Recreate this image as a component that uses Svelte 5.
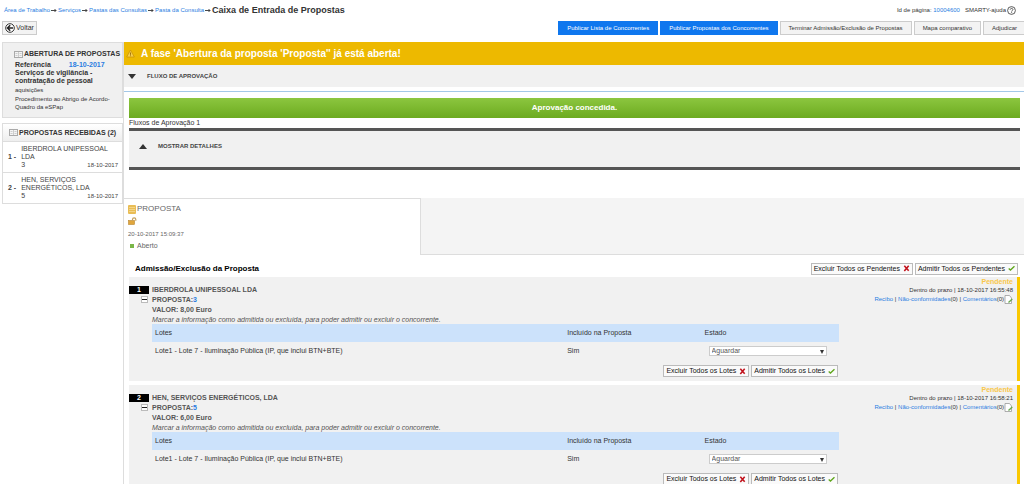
<script>
	const crumbs = ['Área de Trabalho', 'Serviços', 'Pastas das Consultas', 'Pasta da Consulta'];

	const received = [
		{ name: 'IBERDROLA UNIPESSOAL LDA', id: 3, date: '18-10-2017' },
		{ name: 'HEN, SERVIÇOS ENERGÉTICOS, LDA', id: 5, date: '18-10-2017' }
	];

	let bids = $state([
		{ name: 'IBERDROLA UNIPESSOAL LDA', id: 3, value: '8,00', time: '18-10-2017 16:55:48', state: 'Aguardar', open: true },
		{ name: 'HEN, SERVIÇOS ENERGÉTICOS, LDA', id: 5, value: '6,00', time: '18-10-2017 16:58:21', state: 'Aguardar', open: true }
	]);

	function setAll(state) {
		bids.forEach((bid) => (bid.state = state));
	}
</script>

{#snippet cross()}
	<svg class="mark" viewBox="0 0 8 8" aria-hidden="true"><path d="M1.500 .8 6.500 6.600M6.500 .8 1.500 6.800" stroke="#c1121c" stroke-width="1.800" fill="none" /></svg>
{/snippet}

{#snippet tick()}
	<svg class="mark" viewBox="0 0 8 8" aria-hidden="true"><path d="M.8 4 2.800 5.800 7.400 1.400" stroke="#5fa61c" stroke-width="1.500" fill="none" /></svg>
{/snippet}

{#snippet book()}
	<svg class="book" viewBox="0 0 9 7" aria-hidden="true">
		<rect x=".5" y=".5" width="8" height="6" fill="#f4f4f4" stroke="#aaa" />
		<path d="M4.500 1v5M1.500 2.500h2M1.500 4.500h2M5.500 2.500h2M5.500 4.500h2" stroke="#bbb" stroke-width=".7" />
	</svg>
{/snippet}

<div class="page">
	<header class="top">
		<nav class="crumbs">
			{#each crumbs as crumb}
				<a href="#top">{crumb}</a>
				<svg class="arrow" viewBox="0 0 6 5" aria-hidden="true"><path d="M0 2.500h5M3.500 1l1.500 1.500L3.500 4" stroke="#333" stroke-width=".9" fill="none" /></svg>
			{/each}
			<h1>Caixa de Entrada de Propostas</h1>
		</nav>
		<div class="page-id">
			<span>Id de página: <a href="#id">10004600</a></span>
			<a class="help" href="#help">
				SMARTY-ajuda
				<svg viewBox="0 0 9 9" aria-hidden="true">
					<circle cx="4.500" cy="4.500" r="3.900" fill="none" stroke="#333" stroke-width=".8" />
					<path d="M3.200 3.700c0-1.800 2.700-1.700 2.700-.1 0 .9-1.300 1-1.300 2M4.600 6.200v.9" fill="none" stroke="#333" stroke-width=".8" />
				</svg>
			</a>
		</div>
	</header>

	<div class="toolbar">
		<button class="btn back">
			<svg viewBox="0 0 10 10" aria-hidden="true">
				<circle cx="5" cy="5" r="4.300" fill="#fff" stroke="#333" />
				<path d="M8 5H3M5.200 2.300 2.500 5l2.700 2.700" fill="none" stroke="#222" stroke-width="1.500" />
			</svg>
			Voltar
		</button>
		<div class="actions">
			<button class="btn primary">Publicar Lista de Concorrentes</button>
			<button class="btn primary">Publicar Propostas dos Concorrentes</button>
			<button class="btn">Terminar Admissão/Exclusão de Propostas</button>
			<button class="btn">Mapa comparativo</button>
			<button class="btn">Adjudicar</button>
		</div>
	</div>

	<div class="columns">
		<aside>
			<section class="summary">
				<h2>{@render book()} ABERTURA DE PROPOSTAS</h2>
				<p class="ref"><b>Referência</b> <a href="#ref">18-10-2017</a></p>
				<p class="subject">Serviços de vigilância - contratação de pessoal</p>
				<p class="kind">aquisições</p>
				<p class="kind">Procedimento ao Abrigo de Acordo-Quadro da eSPap</p>
			</section>
			<section class="received">
				<h2>{@render book()} PROPOSTAS RECEBIDAS (2)</h2>
				{#each received as item, i}
					<div class="entry">
						<span class="num">{i + 1} -</span>
						<div class="who">
							<p>{item.name}</p>
							<div class="meta"><span>{item.id}</span><time>{item.date}</time></div>
						</div>
					</div>
				{/each}
			</section>
		</aside>

		<main>
			<div class="banner">
				<svg viewBox="0 0 9 9" aria-hidden="true"><path d="M4.500 1 8.300 8H.7z" fill="#f7cf4a" stroke="#c98f00" stroke-width=".7" /><path d="M4.500 3.500v2.300M4.500 6.400v.8" stroke="#8a5a00" stroke-width=".8" /></svg>
				A fase 'Abertura da proposta 'Proposta'' já está aberta!
			</div>
			<button class="fold"><span class="tri down"></span>FLUXO DE APROVAÇÃO</button>
			<div class="approval">
				<div class="granted">Aprovação concedida.</div>
				<p>Fluxos de Aprovação 1</p>
				<button class="details"><span class="tri up"></span>MOSTRAR DETALHES</button>
			</div>

			<div class="tabs">
				<div class="tab">
					<div class="tab-title">
						<svg viewBox="0 0 8 9" aria-hidden="true"><rect width="8" height="9" rx="1" fill="#e9bd55" /><path d="M1 2.500h6M1 4.500h6M1 6.500h6" stroke="#f3d487" /></svg>
						PROPOSTA
					</div>
					<svg class="lock" viewBox="0 0 9 8" aria-hidden="true"><rect x=".5" y="3.500" width="6" height="4" fill="#e0a63c" stroke="#b9862e" stroke-width=".6" /><path d="M4.500 3.500V2.400C4.500.4 7.800.4 7.800 2.400v1.400" fill="none" stroke="#c4a05c" stroke-width="1.200" /></svg>
					<time>20-10-2017 15:09:37</time>
					<div class="status"><span class="dot"></span>Aberto</div>
				</div>
			</div>

			<div class="head">
				<h2>Admissão/Exclusão da Proposta</h2>
				<div class="pair">
					<button class="btn wide" onclick={() => setAll('Excluir')}>Excluir Todos os Pendentes {@render cross()}</button>
					<button class="btn wide" onclick={() => setAll('Admitir')}>Admitir Todos os Pendentes {@render tick()}</button>
				</div>
			</div>

			{#each bids as bid, i}
				<article class="bid">
					<div class="side">
						<span class="badge">{i + 1}</span>
						<button class="minus" aria-label="Fechar proposta" onclick={() => (bid.open = !bid.open)}></button>
					</div>
					<div class="body">
						<h3>{bid.name}</h3>
						<p class="prop">PROPOSTA:<a href="#bid">{bid.id}</a></p>
						<p class="value">VALOR: {bid.value} Euro</p>
						<p class="hint">Marcar a informação como admitida ou excluída, para poder admitir ou excluir o concorrente.</p>
						{#if bid.open}
							<table>
								<thead>
									<tr><th class="lot">Lotes</th><th class="inc">Incluído na Proposta</th><th>Estado</th></tr>
								</thead>
								<tbody>
									<tr>
										<td>Lote1 - Lote 7 - Iluminação Pública (IP, que inclui BTN+BTE)</td>
										<td>Sim</td>
										<td>
											<span class="pick">
												<select bind:value={bid.state} aria-label="Estado">
													<option>Aguardar</option>
													<option>Admitir</option>
													<option>Excluir</option>
												</select>
											</span>
										</td>
									</tr>
								</tbody>
							</table>
							<div class="pair">
								<button class="btn wide" onclick={() => (bid.state = 'Excluir')}>Excluir Todos os Lotes {@render cross()}</button>
								<button class="btn wide" onclick={() => (bid.state = 'Admitir')}>Admitir Todos os Lotes {@render tick()}</button>
							</div>
						{/if}
					</div>
					<div class="info">
						<b>Pendente</b>
						<p>Dentro do prazo | {bid.time}</p>
						<p class="links">
							<span><a href="#receipt">Recibo</a> | <a href="#issues">Não-conformidades</a>(0) | <a href="#comments">Comentários</a>(0)</span>
							<svg viewBox="0 0 9 9" aria-hidden="true"><path d="M1 .5h4.500L7.500 3v5.500H1z" fill="#fff" stroke="#999" stroke-width=".8" /><path d="M4.500 7.500 8.300 4" stroke="#6aa84f" stroke-width="1.400" /></svg>
						</p>
					</div>
				</article>
			{/each}
		</main>
	</div>
</div>

<style>
	:global(body) {
		background: #fff;
		color: #333;
		font: 7px/8px "Liberation Sans", Arial, sans-serif;
		overflow-x: hidden;
	}

	.page {
		overflow: hidden;
	}

	h1, h2, h3, p {
		margin: 0;
		font-size: inherit;
	}

	a {
		color: #2a7de1;
		text-decoration: none;
	}

	button, select {
		font: inherit;
		color: inherit;
		cursor: pointer;
	}

	svg {
		flex: none;
	}

	.top {
		display: flex;
		justify-content: space-between;
		align-items: center;
		height: 20px;
		padding: 0 8px 0 4px;
		font-size: 6px;
	}

	.crumbs {
		display: flex;
		align-items: center;
		gap: 1px;
	}

	.arrow {
		width: 6px;
		height: 5px;
	}

	h1 {
		font-size: 9px;
		line-height: 12px;
	}

	.page-id, .help {
		display: flex;
		align-items: center;
	}

	.page-id {
		gap: 5px;
	}

	.help {
		gap: 1px;
		color: #333;
	}

	.help svg {
		width: 9px;
		height: 9px;
	}

	.toolbar {
		display: flex;
		justify-content: space-between;
		margin: 1px 0 7px 2px;
	}

	.actions {
		display: flex;
		gap: 2px;
		margin-right: -2px;
		font-size: 6px;
	}

	.btn {
		display: flex;
		align-items: center;
		gap: 3px;
		height: 14px;
		padding: 0 8px;
		border: 1px solid #ccc;
		background: #f3f3f3;
		white-space: nowrap;
	}

	.primary {
		border-color: #0f77ee;
		background: #0f77ee;
		color: #fff;
	}

	.back {
		gap: 1px;
		padding: 0 2px;
	}

	.back svg {
		width: 10px;
		height: 10px;
	}

	.columns {
		display: flex;
	}

	aside {
		flex: none;
		width: 121px;
		margin-left: 2px;
	}

	.book {
		width: 9px;
		height: 7px;
	}

	.summary {
		box-sizing: border-box;
		height: 76px;
		margin-bottom: 5px;
		padding: 7px 2px 0 12px;
		border: 1px solid #ddd;
		background: #f0f0f0;
	}

	.summary h2, .received h2 {
		display: flex;
		align-items: center;
		gap: 1px;
		white-space: nowrap;
	}

	.summary h2 {
		margin-left: -1px;
	}

	.ref {
		display: flex;
		gap: 18px;
		margin-top: 3px;
		font-weight: bold;
	}

	.subject {
		padding-right: 20px;
		font-weight: bold;
	}

	.kind {
		margin: 1px 0;
		font-size: 6px;
	}

	.received {
		border: 1px solid #ddd;
	}

	.received h2 {
		height: 17px;
		padding-left: 6px;
		border-bottom: 1px solid #ddd;
		background: linear-gradient(#fff, #eee);
	}

	.entry {
		display: flex;
		align-items: center;
		gap: 5px;
		height: 30px;
		padding: 0 4px 0 5px;
		color: #444;
	}

	.entry + .entry {
		border-top: 1px solid #ddd;
	}

	.num {
		font-weight: bold;
	}

	.who {
		flex: 1;
	}

	.who p {
		max-width: 94px;
	}

	.meta {
		display: flex;
		justify-content: space-between;
	}

	.meta time {
		font-size: 6px;
	}

	main {
		flex: 1;
		min-width: 0;
		border-left: 1px solid #ddd;
	}

	.banner {
		display: flex;
		align-items: center;
		gap: 6px;
		height: 23px;
		padding-left: 2px;
		background: #edb900;
		color: #fff;
		font-size: 10px;
		font-weight: bold;
	}

	.banner svg {
		width: 9px;
		height: 9px;
	}

	.fold, .details {
		display: flex;
		align-items: center;
		gap: 11px;
		width: 100%;
		border: 0;
		background: #f1f1f1;
		color: #444;
		font-size: 6px;
		font-weight: bold;
	}

	.fold {
		height: 22px;
		padding: 0 4px;
	}

	.tri {
		border: 4px solid transparent;
	}

	.down {
		border-top: 5px solid #333;
		border-bottom: 0;
	}

	.up {
		border-bottom: 5px solid #333;
		border-top: 0;
	}

	.approval {
		margin-top: 4px;
		padding: 6px 4px 28px 5px;
		border-top: 1px solid #a4c8e8;
	}

	.granted {
		height: 20px;
		background: linear-gradient(#8cc63f, #6cab20);
		color: #fff;
		font-size: 8px;
		font-weight: bold;
		line-height: 20px;
		text-align: center;
	}

	.approval p {
		padding: 1px 0;
	}

	.details {
		height: 42px;
		padding: 0 10px 6px;
		border-top: 3px solid #555;
		border-bottom: 3px solid #555;
	}

	.tabs {
		display: flex;
		height: 56px;
		border-bottom: 1px solid #ddd;
		background: #f4f4f4;
	}

	.tab {
		box-sizing: border-box;
		width: 33%;
		height: 57px;
		padding: 4px;
		border: 1px solid #ddd;
		border-width: 1px 1px 0 0;
		background: #fff;
		color: #666;
		line-height: 12px;
	}

	.tab-title, .status {
		display: flex;
		align-items: center;
	}

	.tab-title {
		gap: 1px;
		font-size: 8px;
	}

	.tab-title svg {
		width: 8px;
		height: 9px;
	}

	.lock {
		display: block;
		width: 9px;
		height: 8px;
		margin: 2px 0 3px;
	}

	.tab time {
		display: block;
		font-size: 6px;
	}

	.status {
		gap: 3px;
	}

	.dot {
		width: 4px;
		height: 4px;
		margin-left: 2px;
		background: #7ab648;
	}

	.head {
		display: flex;
		box-sizing: border-box;
		justify-content: space-between;
		align-items: center;
		height: 22px;
		padding: 5px 6px 0 11px;
	}

	.head h2 {
		color: #000;
		font-size: 8px;
	}

	.pair {
		display: flex;
		justify-content: flex-end;
		gap: 2px;
	}

	.wide {
		height: 12px;
		padding: 0 2px;
		border-color: #bbb;
		background: #fafafa;
		color: #111;
	}

	.mark {
		width: 7px;
		height: 7px;
	}

	.bid {
		display: flex;
		margin: 0 4px 4px 5px;
		min-height: 104px;
		border-right: 3px solid #fac800;
		background: #f1f1f1;
	}

	.side {
		display: flex;
		flex-direction: column;
		align-items: flex-end;
		width: 20px;
		padding-top: 9px;
	}

	.badge {
		width: 20px;
		background: #000;
		color: #fff;
		font-weight: bold;
		text-align: center;
	}

	.minus {
		box-sizing: border-box;
		width: 7px;
		height: 7px;
		margin: 2px 1px;
		padding: 0;
		border: 1px solid #bbb;
		background: linear-gradient(#fff 2px, #222 2px, #222 3px, #fff 3px);
	}

	.body {
		width: 687px;
		margin-left: 3px;
		padding-top: 8px;
		color: #555;
		line-height: 10px;
	}

	.prop, .value {
		font-weight: bold;
	}

	.hint {
		line-height: 9px;
		font-style: italic;
	}

	table {
		width: 100%;
		border-collapse: collapse;
		color: #333;
		line-height: 8px;
	}

	th, td {
		height: 18px;
		padding: 0 3px;
		font-weight: normal;
		text-align: left;
	}

	th {
		background: #cce2fb;
	}

	.lot {
		width: 60%;
	}

	.inc {
		width: 20%;
	}

	.pick {
		position: relative;
		display: block;
		width: 118px;
		margin-left: 4px;
	}

	.pick::after {
		content: "";
		position: absolute;
		top: 4px;
		right: 3px;
		border: 2px solid transparent;
		border-top: 4px solid #333;
		border-bottom: 0;
		pointer-events: none;
	}

	select {
		display: block;
		box-sizing: border-box;
		width: 100%;
		height: 10px;
		padding: 0 2px;
		border: 1px solid #ccc;
		border-radius: 0;
		background: #fff;
		color: #555;
		appearance: none;
	}

	.body .pair {
		padding: 5px 1px 0;
	}

	.info {
		flex: 1;
		padding: 1px 4px 0 0;
		font-size: 6px;
		text-align: right;
		white-space: nowrap;
	}

	.info b {
		display: block;
		color: #f9c74a;
		font-size: 7px;
	}

	.info p {
		line-height: 9px;
	}

	.links {
		display: flex;
		justify-content: flex-end;
		align-items: center;
	}

	.links svg {
		width: 9px;
		height: 9px;
	}
</style>
